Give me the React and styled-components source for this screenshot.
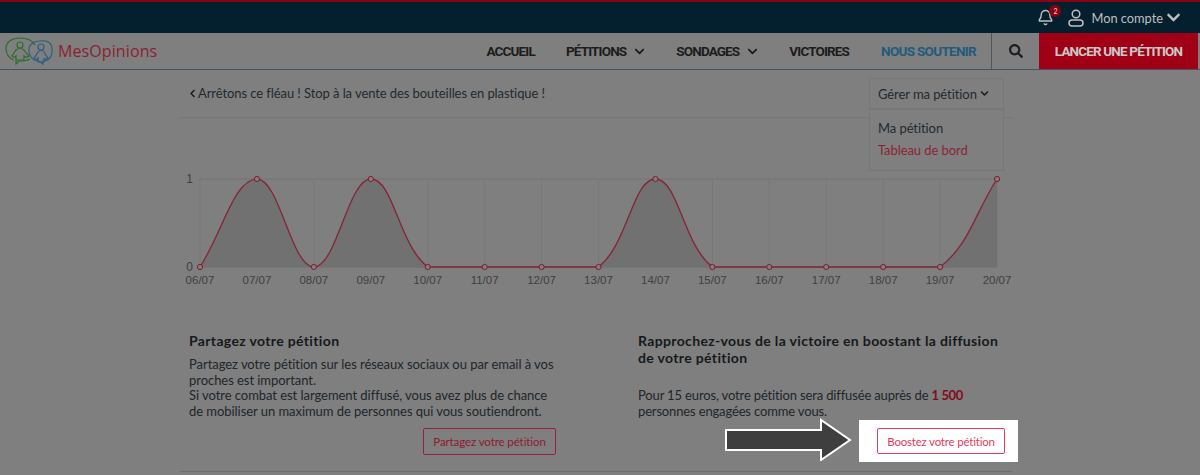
import styled, { createGlobalStyle } from "styled-components";
import { FaChevronDown, FaChevronLeft, FaSearch } from "react-icons/fa";
import { Bell } from "lucide-react";

const GlobalStyle = createGlobalStyle`
  html, body {
    margin: 0;
    background: #7f7f7f;
    font-family: Lato, "Noto Sans", sans-serif;
    overflow: hidden;
  }
`;

const Page = styled.div`
  width: 1200px;
  height: 475px;
  overflow: hidden;
`;

const TopBar = styled.div`
  height: 31px;
  background: #04202f;
  border-top: 2px solid #8a0011;
  display: flex;
  align-items: center;
  justify-content: flex-end;
  padding-right: 19px;
  color: #bfbfbf;
  font-size: 12.8px;
`;

const BellWrap = styled.span`
  position: relative;
  display: flex;
  margin-right: 14px;
`;

const Badge = styled.span`
  position: absolute;
  top: -4px;
  right: -7px;
  width: 12px;
  height: 12px;
  border-radius: 50%;
  background: #8a0011;
  color: #ddd;
  font-size: 7px;
  line-height: 12px;
  text-align: center;
`;

const Account = styled.span`
  display: flex;
  align-items: center;
  gap: 7px;
`;

const NavBar = styled.div`
  height: 36px;
  display: flex;
  align-items: stretch;
  border-bottom: 1px solid #3d5566;
  padding-right: 2px;
`;

const Logo = styled.div`
  display: flex;
  align-items: center;
  margin-left: 5px;
  margin-right: auto;
  gap: 1px;
  color: #8a1f32;
  font-family: "Open Sans", sans-serif;
  font-size: 16px;
  letter-spacing: 0.1px;
`;

const NavLinks = styled.div`
  display: flex;
  align-items: center;
  gap: 31px;
  padding-right: 15px;
  border-right: 1px solid #555;
`;

const NavLink = styled.span`
  display: flex;
  align-items: center;
  gap: 8px;
  font-family: Roboto, sans-serif;
  font-weight: 700;
  font-size: 13.5px;
  letter-spacing: -0.85px;
  color: #1c1c1c;
`;

const AccentLink = styled(NavLink)`
  margin-left: 1px;
  letter-spacing: -0.7px;
  color: #1f5b7c;
`;

const SearchCell = styled.div`
  width: 47px;
  display: flex;
  align-items: center;
  justify-content: center;
  color: #1c1f24;
`;

const Cta = styled.div`
  width: 159px;
  display: flex;
  align-items: center;
  justify-content: center;
  background: #a00015;
  color: #c9c9c9;
  font-family: Roboto, sans-serif;
  font-weight: 700;
  font-size: 13.5px;
  letter-spacing: -0.85px;
`;

const Main = styled.div`
  width: 832px;
  margin-left: 180px;
  position: relative;
`;

const HeadRow = styled.div`
  height: 48px;
  border-bottom: 1px solid #777;
  display: flex;
  justify-content: space-between;
  padding: 8px 8px 0 8px;
  box-sizing: border-box;
  font-size: 13px;
  letter-spacing: -0.08px;
  color: #222a30;
`;

const Back = styled.span`
  display: flex;
  align-items: center;
  height: 30px;
  gap: 1px;
`;

const Dropdown = styled.div`
  position: relative;
  width: 135px;
  height: 31px;
  box-sizing: border-box;
  border: 1px solid #777;
  display: flex;
  align-items: center;
  gap: 3px;
  padding-left: 8px;
`;

const Menu = styled.div`
  position: absolute;
  top: 30px;
  left: -1px;
  width: 135px;
  height: 62px;
  box-sizing: border-box;
  border: 1px solid #777;
  background: #7f7f7f;
  padding: 10px 8px;
  display: flex;
  flex-direction: column;
  gap: 6px;
  line-height: 16px;
`;

const MenuItem = styled.span`
  color: ${(p) => (p.$active ? "#8e1f38" : "#222a30")};
`;

const ChartBox = styled.div`
  height: 164px;
  margin-top: 50px;
`;

const Columns = styled.div`
  display: flex;
  height: 140px;
  border-bottom: 1px solid #6e6e6e;
  box-sizing: border-box;
`;

const Col = styled.div`
  width: ${(p) => p.$w}px;
  margin-left: ${(p) => p.$ml}px;
  display: flex;
  flex-direction: column;
  position: relative;
`;

const Title = styled.h3`
  margin: 0 0 ${(p) => p.$mb}px;
  font-size: 14px;
  line-height: 17px;
  font-weight: 700;
  letter-spacing: 0.35px;
  color: #15191c;
`;

const Text = styled.p`
  margin: 0;
  font-size: 13px;
  letter-spacing: ${(p) => p.$spacing}px;
  line-height: 15.7px;
  color: #20262b;
`;

const Strong = styled.b`
  color: #7f0d1c;
  letter-spacing: -0.4px;
`;

const OutlineButton = styled.button`
  align-self: flex-end;
  width: 133px;
  height: 27px;
  margin-top: 8px;
  padding: 0;
  background: transparent;
  border: 1px solid #98203a;
  border-radius: 2px;
  color: #8e1a30;
  font-family: inherit;
  font-size: 11.5px;
  letter-spacing: -0.1px;
`;

const Spotlight = styled.div`
  position: absolute;
  left: 221px;
  top: 88px;
  width: 159px;
  height: 42px;
  background: #fff;
  display: flex;
  align-items: center;
  justify-content: center;
  padding-left: 5px;
  box-sizing: border-box;
`;

const BoostButton = styled.button`
  width: 128px;
  height: 26px;
  padding: 0;
  background: #fff;
  border: 1px solid #e8385a;
  border-radius: 2px;
  color: #e8385a;
  font-family: inherit;
  font-size: 11.5px;
  letter-spacing: -0.2px;
`;

const Arrow = styled.svg`
  position: absolute;
  left: 85px;
  top: 85px;
`;

const dates = ["06/07","07/07","08/07","09/07","10/07","11/07","12/07","13/07","14/07","15/07","16/07","17/07","18/07","19/07","20/07"];
const values = [0,1,0,1,0,0,0,0,1,0,0,0,0,0,1];

const X0 = 20;
const STEP = 56.93;
const Y1 = 11;
const Y0 = 99;

function buildCurve() {
  const pts = values.map((v, i) => ({ x: X0 + i * STEP, y: v ? Y1 : Y0 }));
  const ctrl = pts.map((p, i) => {
    const a = pts[i - 1] || p;
    const b = pts[i + 1] || p;
    const d1 = Math.hypot(p.x - a.x, p.y - a.y);
    const d2 = Math.hypot(b.x - p.x, b.y - p.y);
    const sum = d1 + d2 || 1;
    const fa = (0.4 * d1) / sum;
    const fb = (0.4 * d2) / sum;
    const clamp = (y) => Math.min(Y0, Math.max(Y1, y));
    return {
      px: p.x - fa * (b.x - a.x),
      py: clamp(p.y - fa * (b.y - a.y)),
      nx: p.x + fb * (b.x - a.x),
      ny: clamp(p.y + fb * (b.y - a.y)),
    };
  });
  let d = `M${pts[0].x} ${pts[0].y}`;
  for (let i = 1; i < pts.length; i++) {
    d += ` C${ctrl[i - 1].nx} ${ctrl[i - 1].ny} ${ctrl[i].px} ${ctrl[i].py} ${pts[i].x} ${pts[i].y}`;
  }
  return { pts, d };
}

function Chart() {
  const { pts, d } = buildCurve();
  const last = pts[pts.length - 1];
  return (
    <svg width="832" height="164" style={{ display: "block" }}>
      {pts.map((p) => (
        <line key={p.x} x1={p.x} x2={p.x} y1={Y1} y2={Y0} stroke="#797979" />
      ))}
      <line x1={X0} x2={last.x} y1={Y1} y2={Y1} stroke="#747474" />
      <line x1={X0} x2={last.x} y1={Y0} y2={Y0} stroke="#6c6c6c" />
      <path d={`${d} L${last.x} ${Y0} L${X0} ${Y0} Z`} fill="#717171" />
      <path d={d} fill="none" stroke="#852535" strokeWidth="1.3" />
      {pts.map((p) => (
        <circle key={p.x} cx={p.x} cy={p.y} r="2.6" fill="#7f7f7f" stroke="#85192b" strokeWidth="1" />
      ))}
      <g fontFamily="Liberation Sans, sans-serif" fontSize="11.5" fill="#404040">
        <text x="13" y={Y1 + 4} textAnchor="end" fontSize="12">1</text>
        <text x="13" y={Y0 + 4} textAnchor="end" fontSize="12">0</text>
        {dates.map((t, i) => (
          <text key={t} x={pts[i].x} y={Y0 + 17} textAnchor="middle">{t}</text>
        ))}
      </g>
    </svg>
  );
}

function LogoMark() {
  return (
    <svg width="52" height="30" viewBox="0 0 52 30" fill="none" strokeWidth="1.2">
      <g stroke="#2c6e2e">
        <path d="M9 24 C3 22 1 18 1 12 C1 6 7 2 15 2 C21 2 27 4 30 9 M25 23 C22 25 18 25 14 25 L11 28 L11 24" />
        <circle cx="15" cy="9" r="3" />
        <path d="M7 20 C9 18 10 15 11 14 C13 12 17 12 19 14 C20 16 22 18 24 20 C22 22 20 21 19 20 L19 24 L11 24 L11 20 C10 21 8 22 7 20Z" />
      </g>
      <g stroke="#2b5f80">
        <path d="M35 5 C41 4 46 6 47 12 C48 19 45 24 40 25 L38 25 L38 28 L34 25 C28 25 25 21 24 16 C23 9 28 5 35 5Z" />
        <circle cx="36" cy="11" r="3" />
        <path d="M29 22 C31 20 32 17 33 16 C35 14 38 14 39 16 C40 18 41 20 43 22 C41 24 39 23 39 22 L39 26 L33 26 L33 22 C32 23 30 24 29 22Z" />
      </g>
    </svg>
  );
}

function UserIcon() {
  return (
    <svg width="16" height="18" viewBox="0 0 16 18" fill="none" stroke="#bfbfbf" strokeWidth="1.5">
      <circle cx="8" cy="5" r="3.8" />
      <rect x="1" y="11" width="14" height="6" rx="3" />
    </svg>
  );
}

export default function App() {
  return (
    <Page>
      <GlobalStyle />
      <TopBar>
        <BellWrap>
          <Bell size={17} />
          <Badge>2</Badge>
        </BellWrap>
        <Account>
          <UserIcon />
          Mon compte
          <FaChevronDown size={15} style={{ marginLeft: -4 }} />
        </Account>
      </TopBar>
      <NavBar>
        <Logo>
          <LogoMark />
          MesOpinions
        </Logo>
        <NavLinks>
          <NavLink>ACCUEIL</NavLink>
          <NavLink>PÉTITIONS <FaChevronDown size={11} /></NavLink>
          <NavLink>SONDAGES <FaChevronDown size={11} /></NavLink>
          <NavLink>VICTOIRES</NavLink>
          <AccentLink>NOUS SOUTENIR</AccentLink>
        </NavLinks>
        <SearchCell><FaSearch size={14} /></SearchCell>
        <Cta>LANCER UNE PÉTITION</Cta>
      </NavBar>
      <Main>
        <HeadRow>
          <Back>
            <FaChevronLeft size={9} color="#15191c" />
            Arrêtons ce fléau ! Stop à la vente des bouteilles en plastique !
          </Back>
          <Dropdown>
            Gérer ma pétition <FaChevronDown size={9} color="#15191c" />
            <Menu>
              <MenuItem>Ma pétition</MenuItem>
              <MenuItem $active>Tableau de bord</MenuItem>
            </Menu>
          </Dropdown>
        </HeadRow>
        <ChartBox>
          <Chart />
        </ChartBox>
        <Columns>
          <Col $w={367} $ml={9}>
            <Title $mb={8}>Partagez votre pétition</Title>
            <Text $spacing={-0.05}>
              Partagez votre pétition sur les réseaux sociaux ou par email à vos
              proches est important.<br />
              Si votre combat est largement diffusé, vous avez plus de chance
              de mobiliser un maximum de personnes qui vous soutiendront.
            </Text>
            <OutlineButton>Partagez votre pétition</OutlineButton>
          </Col>
          <Col $w={370} $ml={82}>
            <Title $mb={22}>Rapprochez-vous de la victoire en boostant la diffusion de votre pétition</Title>
            <Text $spacing={-0.15}>
              Pour 15 euros, votre pétition sera diffusée auprès de <Strong>1 500</Strong><br />
              personnes engagées comme vous.
            </Text>
            <Arrow width="130" height="44" viewBox="0 0 130 44">
              <polygon points="3,13 98,13 98,3 127,23 98,43 98,33 3,33" fill="#3f3f3f" stroke="#fff" strokeWidth="2" />
            </Arrow>
            <Spotlight>
              <BoostButton>Boostez votre pétition</BoostButton>
            </Spotlight>
          </Col>
        </Columns>
      </Main>
    </Page>
  );
}
